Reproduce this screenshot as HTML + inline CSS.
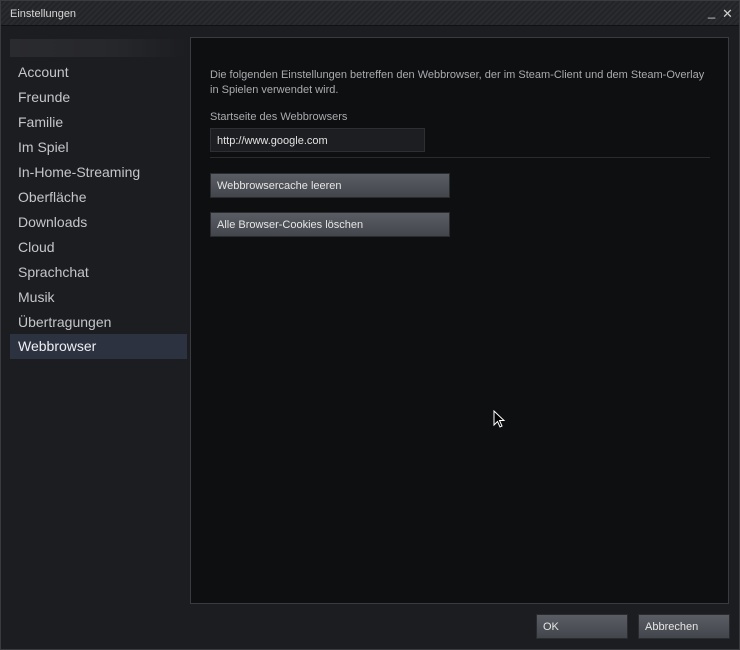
<!DOCTYPE html>
<html><head><meta charset="utf-8"><style>
*{margin:0;padding:0;box-sizing:border-box}
body{width:740px;height:650px;background:#1c1d20;font-family:"Liberation Sans",sans-serif;position:relative;overflow:hidden}
.frame{position:absolute;left:0;top:0;width:740px;height:650px;border:1px solid #3a3b3e;pointer-events:none}
.title{position:absolute;left:0;top:0;width:740px;height:26px;background:repeating-linear-gradient(135deg,#2a2b2e 0 2px,#232427 2px 4px);border-bottom:1px solid #101113;color:#d8d8d8;font-size:11px;line-height:29px;padding-left:10px}
.ctl{position:absolute;top:6px;color:#cfcfcf;font-size:13px}
.blur{position:absolute;left:10px;top:39px;width:176px;height:18px;background:linear-gradient(90deg,#2a2b2f,#26272b 60%,#1c1d20)}
.nav{position:absolute;left:10px;width:177px;height:25px;color:#c4c6c9;font-size:14px;line-height:25px;padding-left:8px}
.sel{background:#2c3240;color:#eef0f4}
.panel{position:absolute;left:190px;top:37px;width:539px;height:567px;background:#0e0f11;border:1px solid #3a3b3e}
.t{position:absolute;color:#a9abae;font-size:11px;line-height:15px}
.input{position:absolute;left:19px;top:90px;width:215px;height:24px;background:#1d1e21;border:1px solid #2e2f33;color:#e2e2e2;font-size:11px;line-height:24px;padding-left:6px}
.line{position:absolute;left:19px;top:119px;width:500px;height:1px;background:#2a2b2e}
.btn{position:absolute;background:linear-gradient(#5a5d63,#43464b);border:1px solid #2a2b2e;color:#e6e6e6;font-size:11px;line-height:24px;padding-left:6px;height:25px}
</style></head><body>
<div class="title">Einstellungen</div>
<div class="ctl" style="left:708px;top:4px">_</div>
<div class="ctl" style="left:722px;top:6px">✕</div>
<div class="blur"></div>
<div class="nav" style="top:60px">Account</div>
<div class="nav" style="top:85px">Freunde</div>
<div class="nav" style="top:110px">Familie</div>
<div class="nav" style="top:135px">Im Spiel</div>
<div class="nav" style="top:160px">In-Home-Streaming</div>
<div class="nav" style="top:185px">Oberfläche</div>
<div class="nav" style="top:210px">Downloads</div>
<div class="nav" style="top:235px">Cloud</div>
<div class="nav" style="top:260px">Sprachchat</div>
<div class="nav" style="top:285px">Musik</div>
<div class="nav" style="top:310px">Übertragungen</div>
<div class="nav sel" style="top:334px">Webbrowser</div>
<div class="panel">
<div class="t" style="left:19px;top:30px">Die folgenden Einstellungen betreffen den Webbrowser, der im Steam-Client und dem Steam-Overlay<br>in Spielen verwendet wird.</div>
<div class="t" style="left:19px;top:72px">Startseite des Webbrowsers</div>
<div class="input">http://www.google.com</div>
<div class="line"></div>
<div class="btn" style="left:19px;top:135px;width:240px">Webbrowsercache leeren</div>
<div class="btn" style="left:19px;top:174px;width:240px">Alle Browser-Cookies löschen</div>
<svg style="position:absolute;left:302px;top:372px" width="14" height="20" viewBox="0 0 14 20"><path d="M1 1 L1 15 L4.5 11.5 L7 17 L9 16 L6.5 10.5 L11 10.5 Z" fill="#000" stroke="#fff" stroke-width="1"/></svg>
</div>
<div class="btn" style="left:536px;top:614px;width:92px">OK</div>
<div class="btn" style="left:638px;top:614px;width:92px">Abbrechen</div>
<div class="frame"></div>
</body></html>
